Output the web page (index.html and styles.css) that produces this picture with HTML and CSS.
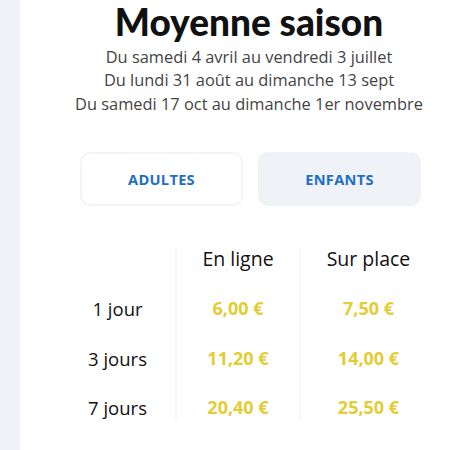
FILE: index.html
```html
<!DOCTYPE html>
<html>
<head>
  <title>Tarifs</title>
  <link rel="stylesheet" href="styles.css">
</head>
<body>
  <div class="card">
    <div class="intro">
      <h1>Moyenne saison</h1>
      <p>Du samedi 4 avril au vendredi 3 juillet</p>
      <p>Du lundi 31 août au dimanche 13 sept</p>
      <p>Du samedi 17 oct au dimanche 1er novembre</p>
    </div>
    <div class="tabs">
      <button class="tab active">ADULTES</button>
      <button class="tab">ENFANTS</button>
    </div>
    <table class="prices">
      <tr>
        <th class="label"></th>
        <th class="online">En ligne</th>
        <th class="onsite">Sur place</th>
      </tr>
      <tr>
        <td class="label">1 jour</td>
        <td class="price online">6,00 €</td>
        <td class="price onsite">7,50 €</td>
      </tr>
      <tr>
        <td class="label">3 jours</td>
        <td class="price online">11,20 €</td>
        <td class="price onsite">14,00 €</td>
      </tr>
      <tr>
        <td class="label">7 jours</td>
        <td class="price online">20,40 €</td>
        <td class="price onsite">25,50 €</td>
      </tr>
    </table>
  </div>
</body>
</html>
```

FILE: styles.css
```css
* {box-sizing: border-box}
body {
  margin: 0;
  background: #eff3f8;
  font-family: "Open Sans", sans-serif;
  height: 450px;
  overflow: hidden;
}
.card {
  margin-left: 20px;
  background: #fff;
  height: 450px;
}
.intro {text-align: center; padding-left: 28px;}
h1 {
  margin: 0;
  font-family: Lato, sans-serif;
  font-weight: 900;
  font-size: 37px;
  line-height: 44.5px;
  color: #111;
}
.intro p {
  margin: 0;
  font-size: 16.4px;
  line-height: 23.5px;
  color: #444;
}
.tabs {
  display: flex;
  gap: 15px;
  margin: 37px 0 0 60px;
}
.tab {
  width: 163px;
  height: 54px;
  border-radius: 10px;
  border: 2px solid #f3f5f8;
  background: #fff;
  font-family: "Open Sans", sans-serif;
  font-weight: bold;
  font-size: 14.6px;
  color: #1e6fc1;
  letter-spacing: 0.3px;
}
.tab + .tab {
  background: #eff3f7;
  border-color: #eff3f7;
}
.prices {
  margin: 42px 0 0 40px;
  border-collapse: collapse;
}
.prices th, .prices td {
  padding: 0;
  text-align: center;
  vertical-align: top;
  line-height: 25px;
  font-size: 18.5px;
  color: #111;
}
.prices th {
  font-weight: normal;
  font-size: 19.5px;
  line-height: 22px;
  height: 36px;
}
.prices td {height: 49.5px; padding-top: 12px;}
.prices tr:last-child td {height: 37px;}
.label {width: 116px;}
.online {width: 124px; border-left: 2px solid #f5f7f9;}
.onsite {width: 136px; border-left: 2px solid #f5f7f9;}
.price {
  color: #e3cd34 !important;
  font-weight: bold;
  font-size: 18px !important;
}
```
